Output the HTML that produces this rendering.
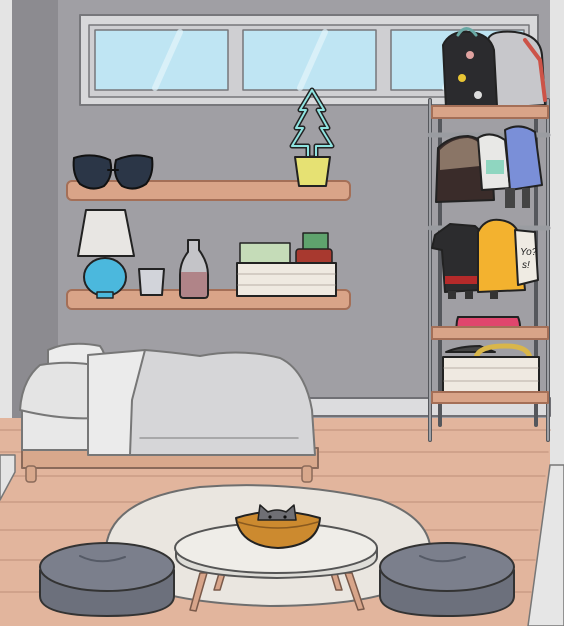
<!DOCTYPE html>
<html><head><meta charset="utf-8"><style>
html,body{margin:0;padding:0;width:564px;height:626px;overflow:hidden;background:#a09fa4}
svg{display:block}
</style></head><body>
<svg width="564" height="626" viewBox="0 0 564 626" xmlns="http://www.w3.org/2000/svg" stroke-linejoin="round" stroke-linecap="round">
<rect x="0" y="0" width="564" height="626" fill="#a09fa4"/>
<rect x="12" y="0" width="46" height="460" fill="#8c8b90"/>
<rect x="0" y="0" width="12" height="470" fill="#e4e4e4"/>
<rect x="550" y="0" width="14" height="470" fill="#e4e4e4"/>
<rect x="58" y="398" width="492" height="18" fill="#dcdcde" stroke="#707075" stroke-width="2"/>
<path d="M0,418 L550,418 L550,470 L530,626 L0,626 Z" fill="#e2b59d"/>
<g stroke="#c99c85" stroke-width="1.5">
<line x1="0" y1="430" x2="550" y2="430"/><line x1="0" y1="452" x2="548" y2="452"/>
<line x1="0" y1="476" x2="545" y2="476"/><line x1="0" y1="502" x2="542" y2="502"/>
<line x1="0" y1="530" x2="538" y2="530"/><line x1="0" y1="560" x2="535" y2="560"/>
<line x1="0" y1="592" x2="531" y2="592"/>
</g>
<path d="M0,455 L15,455 L15,472 L0,500 Z" fill="#e4e4e4" stroke="#777" stroke-width="1.5"/>
<path d="M550,465 L564,465 L564,626 L528,626 Z" fill="#e6e6e6" stroke="#777" stroke-width="1.5"/>
<rect x="80" y="15" width="458" height="90" fill="#d8d8da" stroke="#77777b" stroke-width="2"/>
<rect x="89" y="25" width="440" height="72" fill="#cfcfd2" stroke="#77777b" stroke-width="1.5"/>
<rect x="95" y="30" width="133" height="60" fill="#bfe5f3" stroke="#77777b" stroke-width="1.5"/>
<rect x="243" y="30" width="133" height="60" fill="#bfe5f3" stroke="#77777b" stroke-width="1.5"/>
<rect x="391" y="30" width="133" height="60" fill="#bfe5f3" stroke="#77777b" stroke-width="1.5"/>
<g stroke="#e4f5fb" stroke-width="6" opacity=".7"><line x1="155" y1="88" x2="180" y2="32"/><line x1="300" y1="88" x2="325" y2="32"/><line x1="445" y1="88" x2="470" y2="32"/></g>
<rect x="67" y="181" width="283" height="19" rx="5" fill="#d9a488" stroke="#a46f57" stroke-width="2"/>
<rect x="67" y="290" width="283" height="19" rx="5" fill="#d9a488" stroke="#a46f57" stroke-width="2"/>
<g stroke="#111" stroke-width="2" fill="#2b3647">
<path d="M74,158 Q92,152 110,160 Q114,176 104,186 Q92,192 80,184 Q72,174 74,158 Z"/>
<path d="M152,158 Q134,152 116,160 Q112,176 122,186 Q134,192 146,184 Q154,174 152,158 Z"/>
<line x1="108" y1="170" x2="118" y2="170"/>
</g>
<path d="M312,90 L300,110 L306,110 L296,128 L303,128 L292,146 L308,146 L308,158 L316,158 L316,146 L332,146 L321,128 L328,128 L318,110 L324,110 Z" fill="none" stroke="#222" stroke-width="5"/>
<path d="M312,90 L300,110 L306,110 L296,128 L303,128 L292,146 L308,146 L308,158 L316,158 L316,146 L332,146 L321,128 L328,128 L318,110 L324,110 Z" fill="none" stroke="#8fe3e0" stroke-width="2"/>
<path d="M295,157 L330,157 L326,186 L299,186 Z" fill="#e6e173" stroke="#222" stroke-width="2"/>
<path d="M86,210 L125,210 L134,256 L78,256 Z" fill="#e8e6e3" stroke="#222" stroke-width="2"/>
<ellipse cx="105" cy="277" rx="21" ry="19" fill="#4bb8dd" stroke="#222" stroke-width="2"/>
<rect x="97" y="292" width="16" height="6" fill="#4bb8dd" stroke="#222" stroke-width="1.5"/>
<path d="M139,269 L164,269 L162,295 L141,295 Z" fill="#d2d4da" stroke="#222" stroke-width="2"/>
<path d="M188,240 L199,240 L199,250 Q208,262 208,275 L208,294 Q208,298 204,298 L184,298 Q180,298 180,294 L180,275 Q180,262 188,252 Z" fill="#c4c4c8" stroke="#222" stroke-width="2"/>
<path d="M181,272 L207,272 L207,294 Q207,297 204,297 L184,297 Q181,297 181,294 Z" fill="#b08488"/>
<rect x="240" y="243" width="50" height="25" fill="#c5dcb8" stroke="#222" stroke-width="1.5"/>
<rect x="303" y="233" width="25" height="20" fill="#5fa36d" stroke="#222" stroke-width="1.5"/>
<rect x="296" y="249" width="36" height="18" rx="3" fill="#a8392f" stroke="#222" stroke-width="1.5"/>
<rect x="237" y="263" width="99" height="33" fill="#efe9e1" stroke="#222" stroke-width="2"/>
<line x1="238" y1="274" x2="335" y2="274" stroke="#b8b0a6"/><line x1="238" y1="285" x2="335" y2="285" stroke="#b8b0a6"/>
<g stroke="#55575c" stroke-width="4">
<line x1="430" y1="100" x2="430" y2="440"/><line x1="548" y1="100" x2="548" y2="440"/>
<line x1="440" y1="115" x2="440" y2="425"/><line x1="536" y1="115" x2="536" y2="425"/>
</g>
<g stroke="#9fa1a6" stroke-width="2"><line x1="430" y1="100" x2="430" y2="440"/><line x1="548" y1="100" x2="548" y2="440"/></g>
<line x1="430" y1="135" x2="548" y2="135" stroke="#9a9ca1" stroke-width="5"/>
<line x1="430" y1="228" x2="548" y2="228" stroke="#9a9ca1" stroke-width="5"/>
<path d="M488,40 Q490,30 515,32 Q540,35 542,55 L545,105 L495,108 Z" fill="#c7c7cb" stroke="#222" stroke-width="2"/>
<path d="M525,40 L540,60 L545,100" stroke="#cc5348" stroke-width="4" fill="none"/>
<path d="M443,45 Q450,30 470,32 Q490,34 494,50 L497,106 L446,108 Z" fill="#2b2b2e" stroke="#222" stroke-width="2"/>
<path d="M458,35 Q466,22 476,35" stroke="#6aa9a5" stroke-width="3" fill="none"/>
<circle cx="462" cy="78" r="4" fill="#e8c534"/><circle cx="478" cy="95" r="4" fill="#ddd"/><circle cx="470" cy="55" r="4" fill="#e0a2a0"/>
<rect x="432" y="106" width="116" height="12" fill="#d9a488" stroke="#a46f57" stroke-width="2"/>
<path d="M438,148 Q450,136 468,136 Q486,138 492,160 L494,200 L436,202 Z" fill="#3a2c2a" stroke="#222" stroke-width="2"/>
<path d="M440,150 Q452,138 468,138 Q484,140 490,165 L440,170 Z" fill="#8a7566"/>
<path d="M478,138 Q490,130 505,140 L510,188 L482,190 Z" fill="#e8e8e6" stroke="#222" stroke-width="2"/>
<rect x="486" y="160" width="18" height="14" fill="#8fd6c0"/>
<path d="M505,130 Q520,122 535,132 L542,185 L510,190 Z" fill="#7a8fd8" stroke="#222" stroke-width="2"/>
<rect x="505" y="188" width="10" height="20" fill="#444"/><rect x="522" y="188" width="8" height="20" fill="#444"/>
<path d="M435,235 L450,224 L475,226 L490,240 L485,250 L480,290 L445,292 L442,250 L432,248 Z" fill="#2c2c2e" stroke="#222" stroke-width="2"/>
<rect x="445" y="276" width="36" height="8" fill="#b52a2a"/>
<path d="M478,232 Q485,218 500,220 Q518,222 520,240 L525,290 L478,292 Z" fill="#f3b22f" stroke="#222" stroke-width="2"/>
<path d="M515,230 L535,232 L538,280 L518,285 Z" fill="#efebe3" stroke="#222" stroke-width="2"/>
<text x="520" y="255" font-family="Liberation Sans, sans-serif" font-size="10" font-style="italic" fill="#222">Yo?</text>
<text x="522" y="268" font-family="Liberation Sans, sans-serif" font-size="10" font-style="italic" fill="#222">s!</text>
<rect x="448" y="291" width="8" height="8" fill="#333"/><rect x="465" y="291" width="8" height="8" fill="#333"/><rect x="490" y="291" width="8" height="8" fill="#333"/>
<path d="M458,317 L518,317 Q522,327 518,334 L458,334 Q455,326 458,317 Z" fill="#e0466d" stroke="#222" stroke-width="2"/>
<rect x="432" y="327" width="116" height="12" fill="#d9a488" stroke="#a46f57" stroke-width="2"/>
<path d="M446,352 Q460,346 480,346 L495,352 Z" fill="#444" stroke="#222" stroke-width="2"/>
<path d="M476,358 Q478,346 505,346 Q528,346 530,358" fill="none" stroke="#d9b64a" stroke-width="5"/>
<rect x="443" y="357" width="96" height="38" fill="#efe9e1" stroke="#222" stroke-width="2"/>
<line x1="444" y1="368" x2="538" y2="368" stroke="#b8b0a6"/><line x1="444" y1="381" x2="538" y2="381" stroke="#b8b0a6"/>
<rect x="432" y="392" width="116" height="11" fill="#d9a488" stroke="#a46f57" stroke-width="2"/>
<rect x="22" y="448" width="296" height="20" fill="#d8a88c" stroke="#8a6a5a" stroke-width="2"/>
<rect x="26" y="466" width="10" height="16" rx="3" fill="#d8a88c" stroke="#8a6a5a" stroke-width="1.5"/>
<rect x="302" y="466" width="10" height="16" rx="3" fill="#d8a88c" stroke="#8a6a5a" stroke-width="1.5"/>
<rect x="22" y="410" width="70" height="40" fill="#e8e8e8" stroke="#777" stroke-width="2"/>
<path d="M48,350 Q70,340 100,346 Q110,360 100,372 Q70,378 48,370 Z" fill="#ececec" stroke="#777" stroke-width="2"/>
<path d="M20,410 Q22,380 40,365 Q70,360 100,366 Q108,390 96,418 Q60,420 20,410 Z" fill="#e4e4e4" stroke="#777" stroke-width="2"/>
<path d="M88,355 L145,350 L132,455 L88,455 Z" fill="#ebebeb" stroke="#777" stroke-width="2"/>
<path d="M145,350 Q170,352 200,356 Q240,348 280,358 Q305,370 312,410 L315,455 L130,455 L132,400 Z" fill="#d6d6d8" stroke="#777" stroke-width="2"/>
<line x1="140" y1="438" x2="298" y2="438" stroke="#999" stroke-width="1.5"/>
<path d="M106,560 Q100,500 200,487 Q290,480 380,500 Q436,520 430,560 Q420,605 270,606 Q130,602 106,560 Z" fill="#eae6e0" stroke="#6e6e6e" stroke-width="2"/>
<g stroke="#333" stroke-width="2">
<path d="M40,570 L40,596 Q40,616 107,616 Q174,616 174,596 L174,570 Z" fill="#6c707c"/>
<ellipse cx="107" cy="567" rx="67" ry="24" fill="#7b7f8c"/>
<path d="M380,570 L380,596 Q380,616 447,616 Q514,616 514,596 L514,570 Z" fill="#6c707c"/>
<ellipse cx="447" cy="567" rx="67" ry="24" fill="#7b7f8c"/>
</g>
<path d="M80,556 Q100,566 125,557" fill="none" stroke="#555a66" stroke-width="2"/>
<path d="M420,556 Q440,566 465,557" fill="none" stroke="#555a66" stroke-width="2"/>
<g stroke="#7a5a4a" stroke-width="1.5" fill="#d8a58a">
<path d="M200,573 L190,610 L196,611 L207,573 Z"/><path d="M345,573 L358,610 L364,609 L352,573 Z"/>
<path d="M220,570 L214,590 L220,590 L226,570 Z"/><path d="M330,570 L336,590 L342,590 L336,570 Z"/>
</g>
<path d="M176,548 L176,557 Q178,576 277,578 Q376,576 377,557 L377,548 Z" fill="#deddd8" stroke="#555" stroke-width="2"/>
<ellipse cx="276" cy="548" rx="101" ry="25" fill="#efede8" stroke="#555" stroke-width="2"/>
<path d="M236,518 Q276,505 320,518 Q318,546 278,548 Q240,546 236,518 Z" fill="#cc8a2f" stroke="#222" stroke-width="2"/>
<path d="M258,520 L260,505 L268,512 Q277,508 286,512 L294,505 L296,520 Z" fill="#6f6f74" stroke="#222" stroke-width="1.5"/>
<circle cx="270" cy="517" r="1.6" fill="#111"/><circle cx="285" cy="517" r="1.6" fill="#111"/>
<path d="M238,522 Q278,534 318,522" fill="none" stroke="#8a5a1f" stroke-width="1.5"/>
</svg>
</body></html>
